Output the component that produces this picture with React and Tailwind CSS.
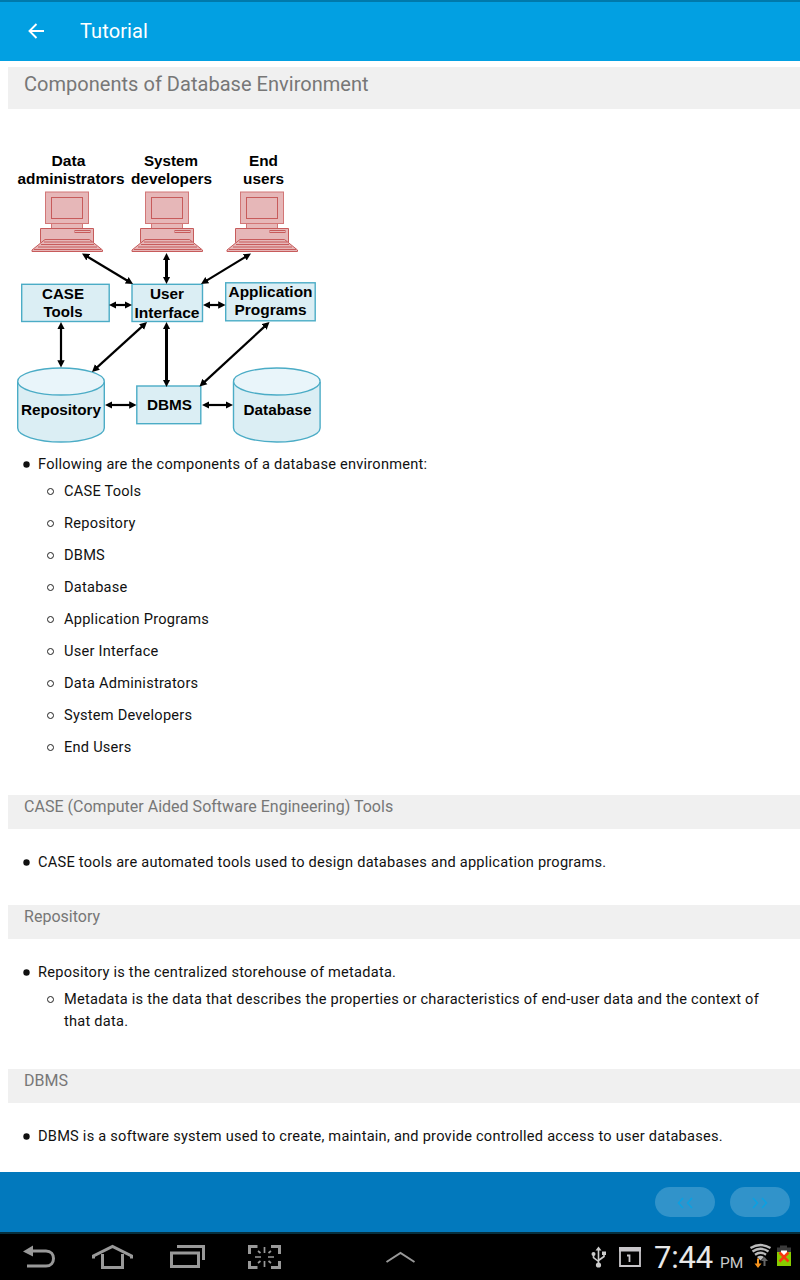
const components = [
  'CASE Tools',
  'Repository',
  'DBMS',
  'Database',
  'Application Programs',
  'User Interface',
  'Data Administrators',
  'System Developers',
  'End Users',
];

const labels = [
  { text: 'Data', x: 68.5, y: 166, w: 34 },
  { text: 'administrators', x: 71, y: 184, w: 107 },
  { text: 'System', x: 171, y: 166, w: 54 },
  { text: 'developers', x: 171.5, y: 184, w: 81 },
  { text: 'End', x: 263.5, y: 166, w: 29 },
  { text: 'users', x: 263.5, y: 184, w: 41 },
  { text: 'CASE', x: 63, y: 299, w: 42 },
  { text: 'Tools', x: 63, y: 317, w: 39 },
  { text: 'User', x: 167, y: 299, w: 34 },
  { text: 'Interface', x: 167, y: 317.5, w: 65 },
  { text: 'Application', x: 270.5, y: 296.5, w: 84 },
  { text: 'Programs', x: 270.5, y: 314.5, w: 72 },
  { text: 'Repository', x: 61, y: 415, w: 80 },
  { text: 'DBMS', x: 169.5, y: 410, w: 45 },
  { text: 'Database', x: 277.5, y: 415, w: 68 },
];

const arrows = [
  [82, 253.5, 133, 284],
  [166.5, 253, 166.5, 284, 3],
  [251, 253.5, 201, 284],
  [109, 305, 132, 305],
  [203, 305, 225.5, 305],
  [61, 322, 61, 367.5],
  [147, 322, 92, 372],
  [166.5, 322, 166.5, 387, 3],
  [269.5, 322, 199.5, 386.5],
  [105, 405, 136.5, 405],
  [202, 405, 233, 405],
];

// Double-headed arrow; the shaft stops short of both tips
function Arrow({ x1, y1, x2, y2, width = 2.2 }) {
  const len = Math.hypot(x2 - x1, y2 - y1);
  const dx = ((x2 - x1) / len) * 5;
  const dy = ((y2 - y1) / len) * 5;
  return (
    <line
      x1={x1 + dx}
      y1={y1 + dy}
      x2={x2 - dx}
      y2={y2 - dy}
      stroke="#000"
      strokeWidth={width}
      markerStart="url(#head)"
      markerEnd="url(#head)"
    />
  );
}

function Computer({ x }) {
  return (
    <g transform={`translate(${x} 0)`} fill="#e6b7b8" stroke="#c75b5b" strokeWidth="1">
      <rect x="19.500" y="223" width="31" height="6" stroke="#d27676" />
      <rect x="13.500" y="192" width="43" height="31.500" stroke="#d27676" />
      <rect x="19.500" y="197.500" width="31" height="21" />
      <path d="M8.500 228.500h53v14h-53z" />
      <rect x="43" y="230.500" width="15" height="2" />
      <path d="M13 239.500h44.500L70.500 250v1.500H0V250z" />
      <path d="M12 242h48M9 244.500h53M6 247h59M2 249.500h67" />
    </g>
  );
}

function Cylinder({ x }) {
  return (
    <g transform={`translate(${x} 0)`} stroke="#4bacc6" strokeWidth="1.4">
      <path d="M0 382v46c0 7.500 19.500 14 43.300 14S86.600 435.500 86.600 428v-46" fill="#dbeef4" />
      <ellipse cx="43.300" cy="381.500" rx="43.300" ry="13.500" fill="#e9f5fa" />
    </g>
  );
}

function Diagram() {
  return (
    <svg viewBox="8 109 330 344" width="330" height="344" className="block tracking-normal">
      <defs>
        <marker id="head" markerUnits="userSpaceOnUse" markerWidth="8" markerHeight="8" refX="2.3" refY="4" orient="auto-start-reverse">
          <path d="M0 .3 7.300 4 0 7.700z" />
        </marker>
      </defs>
      <Computer x={32} />
      <Computer x={132} />
      <Computer x={227} />
      <g fill="#dbeef4" stroke="#4bacc6" strokeWidth="1.4">
        <rect x="21.700" y="284.300" width="87.500" height="37.200" />
        <rect x="132" y="284.300" width="70.500" height="37.200" />
        <rect x="225.700" y="282.800" width="89.500" height="38" />
        <rect x="136.800" y="386" width="64" height="37.700" />
      </g>
      <Cylinder x={17.7} />
      <Cylinder x={233.5} />
      {arrows.map(([x1, y1, x2, y2, width]) => (
        <Arrow key={`${x1}-${y1}`} x1={x1} y1={y1} x2={x2} y2={y2} width={width} />
      ))}
      {labels.map(l => (
        <text
          key={l.text}
          x={l.x}
          y={l.y}
          textLength={l.w}
          lengthAdjust="spacingAndGlyphs"
          textAnchor="middle"
          className="font-['Liberation_Sans',sans-serif] text-[15px] font-bold"
        >
          {l.text}
        </text>
      ))}
    </svg>
  );
}

function Heading({ children }) {
  return (
    <h2 className="h-[34px] bg-[#f0f0f0] pl-4 text-base leading-[23px] tracking-[0.02px] text-[#777]">{children}</h2>
  );
}

function Item({ children }) {
  return (
    <div className="flex pl-[15px]">
      <svg width="15" height="22" className="shrink-0">
        <circle cx="3.500" cy="11.500" r="3.200" fill="#111" />
      </svg>
      <p>{children}</p>
    </div>
  );
}

function SubItem({ children }) {
  return (
    <li className="mb-[10px] flex pl-[39px]">
      <svg width="17" height="22" className="shrink-0">
        <circle cx="3.500" cy="11.500" r="3" fill="none" stroke="#222" />
      </svg>
      <p>{children}</p>
    </li>
  );
}

function PagerButton({ children }) {
  return (
    <button className="flex h-[30px] w-[60px] items-center justify-center rounded-full bg-[#3193ca]">
      <svg width="16" height="12" viewBox="0 0 16 12" fill="none" stroke="#0ba1e2" strokeWidth="1.5" className="mt-0.5">
        {children}
      </svg>
    </button>
  );
}

function SystemBar() {
  return (
    <div className="flex h-12 border-t-2 border-[#06303f] bg-black">
      <svg width="642" height="46" viewBox="0 1234 642 46" fill="none" stroke="#999" strokeWidth="3">
        {/* back */}
        <path d="M31 1251h15c10 0 10 15 0 15H27" />
        <path d="M23 1251.500l10-6v11z" fill="#999" stroke="none" />
        {/* home */}
        <path d="M93.500 1258.500V1256l19-9.500 19 9.500v2.500M102.500 1254v13.500h20V1254" />
        {/* recent apps */}
        <path d="M177 1246.500h26.500V1260" />
        <path d="M171.500 1253h27v13.500h-27z" />
        {/* screen capture */}
        <path d="M249.500 1254v-7.500h8M271 1246.500h8.500v7.500M249.500 1261v6.500h8M271 1267.500h8.500v-6.500" />
        <path
          d="M264.500 1247v6M264.500 1261v6M255 1257h6M268 1257h6M258 1251l2.500 2M271 1251l-2.500 2M258 1263l2.500-2M271 1263l-2.500-2"
          strokeWidth="1.700"
        />
        <path d="M386.500 1262l14-9 14 9" strokeWidth="2" />
        {/* usb */}
        <g stroke="#ccc" strokeWidth="1.600">
          <path d="M598.500 1265v-16M593.500 1254v3.500l5 4M604 1253v3.500l-5.500 4" />
          <path d="M595.500 1250.500l3-4 3 4z" fill="#ccc" stroke="none" />
          <circle cx="598.500" cy="1265" r="2.600" fill="#ccc" stroke="none" />
          <circle cx="593.500" cy="1254" r="2" fill="#ccc" stroke="none" />
          <path d="M602 1251.500h4v3.500h-4z" fill="#ccc" stroke="none" />
        </g>
        {/* calendar */}
        <path d="M620 1248h20v18h-20z" stroke="#c8c6ca" strokeWidth="1.800" />
        <path d="M619 1247h22v4.500h-22z" fill="#c8c6ca" stroke="none" />
        <path d="M627 1255.500h2.500v6.500" stroke="#c8c6ca" strokeWidth="1.800" />
      </svg>
      <div className="flex w-[106px] items-baseline pt-px pl-3 text-[#e8e8e8]">
        <span className="w-[66px] text-[31px] leading-[46px] tracking-[-0.2px] whitespace-nowrap">7:44</span>
        <span className="text-[15.5px] text-[#c8c8c8]">PM</span>
      </div>
      <svg width="52" height="46" viewBox="748 1234 52 46" fill="none">
        {/* wifi */}
        <g stroke="#bbb" strokeWidth="2.300">
          <path d="M750.500 1248q10-6 20 0M752.500 1251.500q8-5.500 16 0M755 1254.700q5.500-4 11 0" />
          <path d="M757 1257q3.500-2.500 7 0l-3.500 3.500z" fill="#bbb" stroke="none" />
        </g>
        <path d="M757 1258.500h2v5h2.500l-3.500 4.500-3.500-4.500h2.500z" fill="#f7941d" />
        <path d="M763.500 1266v-5H761l3.500-4 3.500 4h-2.500v5z" fill="#666" />
        {/* battery */}
        <path d="M780 1245.500h7v2h4v5h-14v-5h3z" fill="#3a3a3a" />
        <path d="M777 1252h14v14h-14z" fill="#8c0" />
        <path d="M781 1250.500h6v4l-3 3-3-3z" fill="#fff" />
        <path d="M779.500 1252.500l9 9M788.500 1252.500l-9 9" stroke="#f8380e" strokeWidth="2.500" />
      </svg>
    </div>
  );
}

export default function App() {
  return (
    <div className="flex h-[1280px] w-[800px] flex-col overflow-hidden bg-white font-[Roboto,sans-serif]">
      <header className="flex h-[61px] shrink-0 items-center border-t-2 border-[#0079ab] bg-[#02a0e2] pb-0.5 pl-7 text-white">
        <svg width="16" height="16" viewBox="0 0 16 16" fill="none" stroke="#fff" strokeWidth="1.900">
          <path d="M16 8H1.500M8.500 1l-7 7 7 7" />
        </svg>
        <h1 className="pl-9 text-[20px] tracking-[0.1px]">Tutorial</h1>
      </header>

      <main className="min-h-0 flex-1 overflow-hidden pt-1.5 pl-2 text-[14.6px] leading-[22px] tracking-[0.235px] text-[#111]">
        <h2 className="h-[42px] bg-[#f0f0f0] pl-4 text-[20px] leading-[34px] tracking-[0.03px] text-[#777]">
          Components of Database Environment
        </h2>
        <Diagram />
        <Item>Following are the components of a database environment:</Item>
        <ul className="mt-[5px] mb-[37px]">
          {components.map(name => (
            <SubItem key={name}>{name}</SubItem>
          ))}
        </ul>

        <Heading>CASE (Computer Aided Software Engineering) Tools</Heading>
        <div className="pt-[22px] pb-8">
          <Item>CASE tools are automated tools used to design databases and application programs.</Item>
        </div>

        <Heading>Repository</Heading>
        <div className="pt-[22px] pb-[27px]">
          <Item>Repository is the centralized storehouse of metadata.</Item>
          <ul className="mt-[5px] pr-8">
            <SubItem>
              Metadata is the data that describes the properties or characteristics of end-user data and the context of that data.
            </SubItem>
          </ul>
        </div>

        <Heading>DBMS</Heading>
        <div className="pt-[22px]">
          <Item>DBMS is a software system used to create, maintain, and provide controlled access to user databases.</Item>
        </div>
      </main>

      <footer className="shrink-0">
        <div className="flex h-[60px] items-center justify-end gap-[15px] bg-[#0279bd] pr-[10px]">
          <PagerButton>
            <path d="M6 1L1.500 6 6 11M15 1l-4.500 5 4.500 5" />
          </PagerButton>
          <PagerButton>
            <path d="M1 1l4.500 5L1 11M10 1l4.500 5-4.500 5" />
          </PagerButton>
        </div>
        <SystemBar />
      </footer>
    </div>
  );
}
